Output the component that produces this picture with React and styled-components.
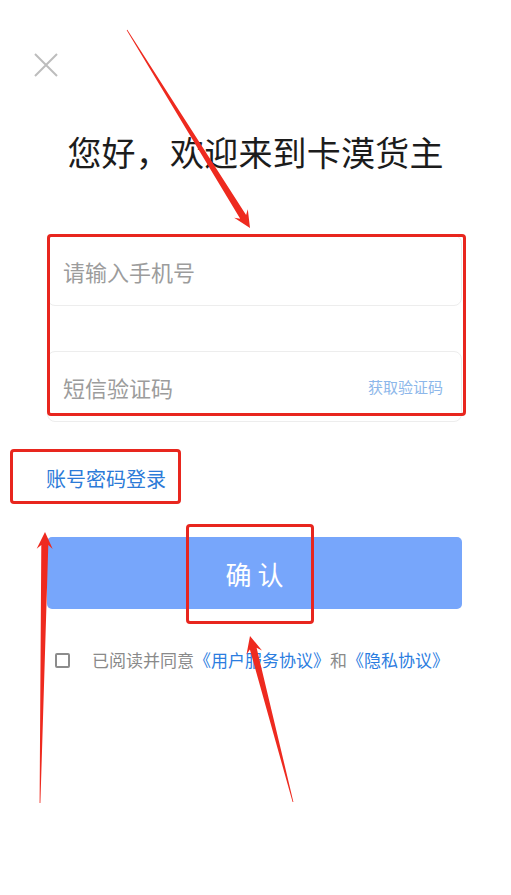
import React from "react";
import styled, { createGlobalStyle } from "styled-components";

const GlobalStyle = createGlobalStyle`
	html, body {
		margin: 0;
		padding: 0;
		background: #ffffff;
	}
	body {
		font-family: "Noto Sans CJK SC", "Noto Sans", sans-serif;
	}
`;

const arrowPoints = (x1, y1, x2, y2, head = 17, hw = 8, sw = 7) => {
	const dx = x2 - x1;
	const dy = y2 - y1;
	const len = Math.hypot(dx, dy);
	const ux = dx / len;
	const uy = dy / len;
	const nx = -uy;
	const ny = ux;
	const bx = x2 - ux * head;
	const by = y2 - uy * head;
	const cx = x2 - ux * (head - 4);
	const cy = y2 - uy * (head - 4);
	const p = [
		[x1 + nx * 0.4, y1 + ny * 0.4],
		[cx + (nx * sw) / 2, cy + (ny * sw) / 2],
		[bx + nx * hw, by + ny * hw],
		[x2, y2],
		[bx - nx * hw, by - ny * hw],
		[cx - (nx * sw) / 2, cy - (ny * sw) / 2],
		[x1 - nx * 0.4, y1 - ny * 0.4],
	];
	return p.map(([x, y]) => `${x.toFixed(1)},${y.toFixed(1)}`).join(" ");
};

const arrows = [
	[127, 30, 250, 228],
	[40, 803, 45, 532],
	[293, 802, 250, 636],
];

const marks = [
	{ left: 47, top: 234, width: 419, height: 182 },
	{ left: 10, top: 449, width: 171, height: 55 },
	{ left: 186, top: 524, width: 128, height: 100 },
];

export default function App() {
	return (
		<>
			<GlobalStyle />
			<Page>
				<CloseButton aria-label="关闭">
					<svg width="24" height="24" viewBox="0 0 24 24">
						<path d="M1 1 L23 23 M23 1 L1 23" stroke="#bdbdbd" strokeWidth="2" fill="none" />
					</svg>
				</CloseButton>
				<Title>您好，欢迎来到卡漠货主</Title>
				<Field>
					<Placeholder>请输入手机号</Placeholder>
				</Field>
				<Field $gap>
					<Placeholder>短信验证码</Placeholder>
					<CodeLink>获取验证码</CodeLink>
				</Field>
				<SwitchLink>账号密码登录</SwitchLink>
				<Confirm>确 认</Confirm>
				<Agreement>
					<CheckBox />
					<span>
						已阅读并同意<Blue>《用户服务协议》</Blue>和<Blue>《隐私协议》</Blue>
					</span>
				</Agreement>

				{marks.map((m, i) => (
					<Mark key={i} style={m} />
				))}
				<Overlay width="511" height="895" viewBox="0 0 511 895">
					{arrows.map((a, i) => (
						<polygon key={i} points={arrowPoints(...a)} fill="#ee2a1f" />
					))}
				</Overlay>
			</Page>
		</>
	);
}

const Page = styled.div`
	position: relative;
	width: 511px;
	height: 895px;
	overflow: hidden;
	background: #ffffff;
	display: flex;
	flex-direction: column;
	padding-top: 53px;
	box-sizing: border-box;
`;

const CloseButton = styled.div`
	width: 24px;
	height: 24px;
	margin-left: 34px;
	svg {
		display: block;
	}
`;

const Title = styled.h1`
	margin: 55px 0 0;
	font-size: 34px;
	line-height: 40px;
	font-weight: 400;
	color: #1c1c1c;
	text-align: center;
	letter-spacing: 0.2px;
`;

const Field = styled.div`
	margin: ${(p) => (p.$gap ? "45px" : "63px")} 49px 0 47px;
	height: 71px;
	box-sizing: border-box;
	border: 1px solid #ededed;
	border-radius: 8px;
	display: flex;
	align-items: center;
	justify-content: space-between;
	padding: 0 18px 0 15px;
`;

const Placeholder = styled.span`
	font-size: 22px;
	color: #9c9c9c;
`;

const CodeLink = styled.span`
	font-size: 15px;
	color: #8db7ea;
`;

const SwitchLink = styled.div`
	margin: 45px 0 0 46px;
	font-size: 20px;
	line-height: 24px;
	color: #2c7bd8;
`;

const Confirm = styled.button`
	margin: 46px 49px 0 47px;
	height: 72px;
	border: none;
	border-radius: 5px;
	background: #77a6fb;
	color: #ffffff;
	font-family: "Noto Sans CJK SC", sans-serif;
	font-size: 26px;
	padding: 0;
`;

const Agreement = styled.div`
	margin: 39px 0 0 55px;
	display: flex;
	align-items: center;
	gap: 22px;
	font-size: 17px;
	line-height: 24px;
	color: #8a8a8a;
`;

const CheckBox = styled.span`
	width: 15px;
	height: 15px;
	box-sizing: border-box;
	border: 2px solid #8c8c8c;
	border-radius: 2px;
	flex: none;
`;

const Blue = styled.span`
	color: #2b7ddf;
`;

const Mark = styled.div`
	position: absolute;
	box-sizing: border-box;
	border: 3px solid #e8261e;
	border-radius: 4px;
	pointer-events: none;
`;

const Overlay = styled.svg`
	position: absolute;
	left: 0;
	top: 0;
	pointer-events: none;
`;
